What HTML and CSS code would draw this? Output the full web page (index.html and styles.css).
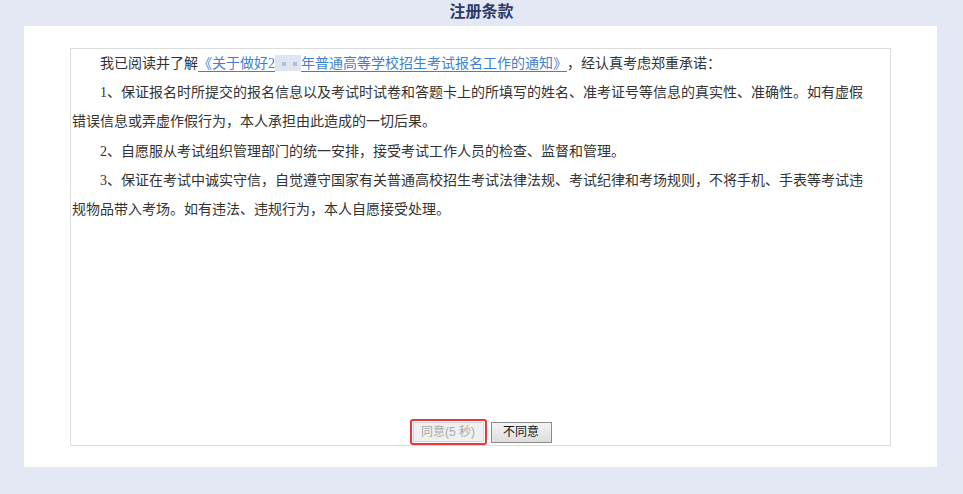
FILE: index.html
```html
<!DOCTYPE html>
<html lang="zh-CN">
<head>
<meta charset="utf-8">
<title>注册条款</title>
<link rel="stylesheet" href="styles.css">
</head>
<body>
<header class="page-head">
  <h1 class="page-title">注册条款</h1>
</header>
<main class="panel">
  <section class="terms-box">
    <div class="terms-text">
      <p>我已阅读并了解<a class="notice-link" href="#">《关于做好2<span class="redact"><i></i><i></i></span>年普通高等学校招生考试报名工作的通知》</a>，经认真考虑郑重承诺：</p>
      <p>1、保证报名时所提交的报名信息以及考试时试卷和答题卡上的所填写的姓名、准考证号等信息的真实性、准确性。如有虚假错误信息或弄虚作假行为，本人承担由此造成的一切后果。</p>
      <p>2、自愿服从考试组织管理部门的统一安排，接受考试工作人员的检查、监督和管理。</p>
      <p>3、保证在考试中诚实守信，自觉遵守国家有关普通高校招生考试法律法规、考试纪律和考场规则，不将手机、手表等考试违规物品带入考场。如有违法、违规行为，本人自愿接受处理。</p>
    </div>
    <div class="actions">
      <span class="highlight"><button class="btn btn-agree" disabled>同意(5 秒)</button></span>
      <button class="btn btn-refuse">不同意</button>
    </div>
  </section>
</main>
</body>
</html>
```

FILE: styles.css
```css
html, body {
  margin: 0;
  padding: 0;
}

body {
  background: #e4e8f4;
  width: 963px;
  height: 494px;
  overflow: hidden;
  font-family: "Liberation Serif", "Noto Sans CJK SC", serif;
  text-spacing-trim: space-all;
}

.page-head {
  height: 26px;
  display: flex;
  align-items: center;
  justify-content: center;
}

.page-title {
  margin: 0;
  font-family: "Liberation Serif", "Noto Sans CJK SC", serif;
  font-size: 16px;
  font-weight: 700;
  line-height: 24px;
  color: #2b3a68;
  padding-bottom: 2px;
}

.panel {
  display: block;
  box-sizing: border-box;
  width: 913px;
  height: 441px;
  margin-left: 24px;
  padding: 22px 46px 21px;
  background: #ffffff;
}

.terms-box {
  box-sizing: border-box;
  height: 398px;
  border: 1px solid #dcdcdc;
  display: flex;
  flex-direction: column;
}

.terms-text {
  flex: 1;
  padding: 0 18px 0 1px;
  font-size: 14px;
  line-height: 29.2px;
  color: #333333;
}

.terms-text p {
  margin: 0;
  text-indent: 28px;
}

.notice-link {
  color: #3f7fcf;
  text-decoration: underline;
  text-underline-offset: 3px;
}

.redact {
  display: inline-block;
  width: 26px;
  height: 16px;
  vertical-align: -3px;
  background: #dfe6f2;
  position: relative;
  text-indent: 0;
}

.redact i {
  position: absolute;
  top: 7px;
  width: 4px;
  height: 4px;
  background: #aebfdc;
}

.redact i:first-child { left: 7px; }
.redact i:last-child { left: 18px; }

.actions {
  display: flex;
  justify-content: center;
  align-items: center;
  gap: 4px;
  height: 26px;
}

.highlight {
  display: flex;
  box-sizing: border-box;
  height: 26px;
  padding: 1px;
  border: 2px solid #e8363b;
  border-radius: 3px;
}

.btn {
  box-sizing: border-box;
  margin: 0;
  padding: 0;
  font-family: "Liberation Sans", "Noto Sans CJK SC", sans-serif;
  font-size: 12px;
  line-height: 18px;
}

.btn-agree {
  width: 71px;
  height: 20px;
  background: #f0f0f0;
  border: 1px solid #d6d6d6;
  color: #a8a8a8;
}

.btn-refuse {
  width: 61px;
  height: 21px;
  background: linear-gradient(#f4f4f4, #dddddd);
  border: 1px solid #8c8c8c;
  color: #111111;
}
```
